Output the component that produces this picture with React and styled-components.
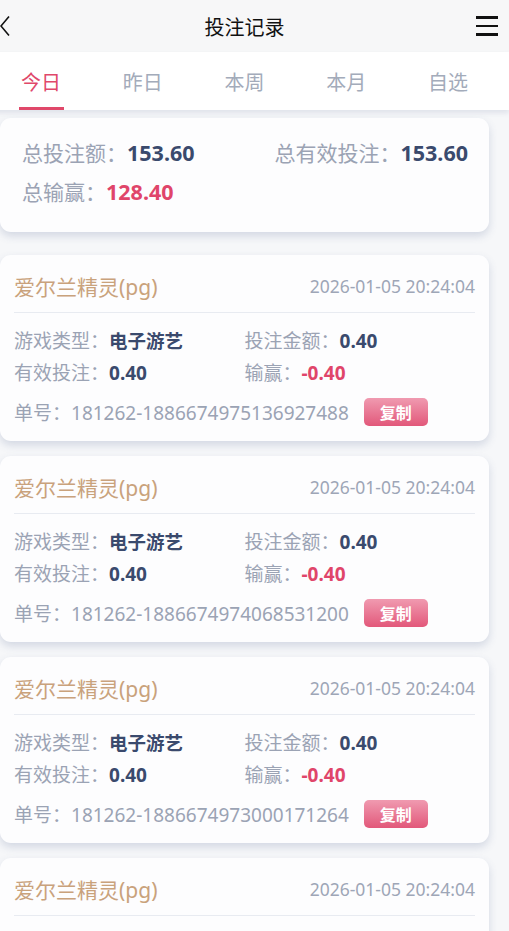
import React, { useState } from "react";
import styled, { createGlobalStyle } from "styled-components";

const GlobalStyle = createGlobalStyle`
  html, body {
    margin: 0;
    padding: 0;
    background: #f6f7f9;
    overflow: hidden;
  }
  body {
    font-family: "Noto Sans", "Noto Sans CJK SC", sans-serif;
  }
`;

const records = [
  { id: "181262-1886674975136927488" },
  { id: "181262-1886674974068531200" },
  { id: "181262-1886674973000171264" },
  { id: "181262-1886674971931811328" },
];

const tabs = ["今日", "昨日", "本周", "本月", "自选"];

const App = () => {
  const [active, setActive] = useState(0);

  return (
    <Page>
      <GlobalStyle />
      <Header>
        <Back>
          <svg width="10" height="22" viewBox="0 0 10 22">
            <path d="M9 1.5 L1 11 L9 20.5" fill="none" stroke="#111" strokeWidth="1.6" />
          </svg>
        </Back>
        <Title>投注记录</Title>
        <Menu>
          <span />
          <span />
          <span />
        </Menu>
      </Header>

      <TabBar>
        {tabs.map((t, i) => (
          <Tab key={t} active={i === active} onClick={() => setActive(i)}>
            {t}
          </Tab>
        ))}
      </TabBar>

      <List>
        <Summary>
          <SumRow>
            <span>
              <Label>总投注额：</Label>
              <Big>153.60</Big>
            </span>
            <span>
              <Label>总有效投注：</Label>
              <Big>153.60</Big>
            </span>
          </SumRow>
          <SumRow>
            <span>
              <Label>总输赢：</Label>
              <Big red>128.40</Big>
            </span>
          </SumRow>
        </Summary>

        {records.map((r) => (
          <Card key={r.id}>
            <CardHead>
              <GameName>爱尔兰精灵(pg)</GameName>
              <Time>2026-01-05 20:24:04</Time>
            </CardHead>
            <Grid>
              <Cell>
                <Label>游戏类型：</Label>
                <Value cjk>电子游艺</Value>
              </Cell>
              <Cell>
                <Label>投注金额：</Label>
                <Value>0.40</Value>
              </Cell>
              <Cell>
                <Label>有效投注：</Label>
                <Value>0.40</Value>
              </Cell>
              <Cell>
                <Label>输赢：</Label>
                <Value red>-0.40</Value>
              </Cell>
            </Grid>
            <OrderRow>
              <Label>单号：{r.id}</Label>
              <CopyBtn>复制</CopyBtn>
            </OrderRow>
          </Card>
        ))}
      </List>
    </Page>
  );
};

const Page = styled.div`
  margin-left: -10px;
  width: 519px;
`;

const Header = styled.div`
  height: 52px;
  background: #f7f7f8;
  display: grid;
  grid-template-columns: 1fr auto 1fr;
  align-items: center;
  padding: 0 20px 0 10px;
`;

const Back = styled.div`
  display: flex;
  align-items: center;
`;

const Title = styled.div`
  font-size: 20px;
  color: #111;
`;

const Menu = styled.div`
  justify-self: end;
  margin-right: -9px;
  width: 22px;
  display: flex;
  flex-direction: column;
  gap: 6px;
  span {
    display: block;
    height: 2.6px;
    background: #111;
  }
`;

const TabBar = styled.div`
  height: 58px;
  background: #fff;
  display: grid;
  grid-template-columns: repeat(5, 1fr);
  padding-right: 10px;
  box-shadow: 0 3px 5px rgba(120, 135, 170, 0.18);
  position: relative;
  z-index: 1;
`;

const Tab = styled.div`
  display: flex;
  justify-content: center;
  align-items: center;
  font-size: 20px;
  color: ${(p) => (p.active ? "#e0486a" : "#a3abba")};
  position: relative;
  &::after {
    content: "";
    display: ${(p) => (p.active ? "block" : "none")};
    position: absolute;
    bottom: 0;
    left: 50%;
    width: 45px;
    margin-left: -22px;
    height: 3px;
    background: #e0486a;
  }
`;

const List = styled.div`
  padding: 8px 20px 0 10px;
  display: flex;
  flex-direction: column;
  gap: 15px;
`;

const Panel = styled.div`
  background: #fdfdfe;
  border-radius: 11px;
  box-shadow: 0 4px 8px rgba(70, 90, 140, 0.2);
`;

const Summary = styled(Panel)`
  padding: 18px 21px 23px 22px;
  display: flex;
  flex-direction: column;
  gap: 5px;
  margin-bottom: 8px;
`;

const SumRow = styled.div`
  display: flex;
  justify-content: space-between;
  align-items: baseline;
  line-height: 34px;
  font-size: 21px;
`;

const Label = styled.span`
  color: #9ba3b4;
  font-size: inherit;
`;

const Big = styled.span`
  font-size: 21.5px;
  font-weight: 700;
  color: ${(p) => (p.red ? "#e0456a" : "#3a4a6d")};
`;

const Card = styled(Panel)`
  padding: 14px 14px 13px;
`;

const CardHead = styled.div`
  display: flex;
  justify-content: space-between;
  align-items: center;
  height: 34px;
  padding-bottom: 9px;
  border-bottom: 1px solid #e8ebf1;
`;

const GameName = styled.div`
  font-size: 21px;
  color: #c9a27c;
`;

const Time = styled.div`
  font-size: 17.5px;
  color: #9ea6b7;
`;

const Grid = styled.div`
  display: grid;
  grid-template-columns: 1fr 1fr;
  padding-top: 12px;
`;

const Cell = styled.div`
  line-height: 32px;
  height: 32px;
  font-size: 19px;
`;

const Value = styled.span`
  font-size: ${(p) => (p.cjk ? "18.5px" : "19px")};
  font-weight: 700;
  color: ${(p) => (p.red ? "#e0456a" : "#3a4a6d")};
`;

const OrderRow = styled.div`
  display: flex;
  align-items: center;
  gap: 15px;
  margin-top: 7px;
  height: 32px;
  font-size: 19px;
`;

const CopyBtn = styled.button`
  border: none;
  width: 64px;
  height: 28px;
  border-radius: 5px;
  background: linear-gradient(180deg, #f09ab0 0%, #e2587a 100%);
  color: #fff;
  font-family: inherit;
  font-size: 16px;
  font-weight: 700;
  padding: 0;
  cursor: pointer;
`;

export default App;
